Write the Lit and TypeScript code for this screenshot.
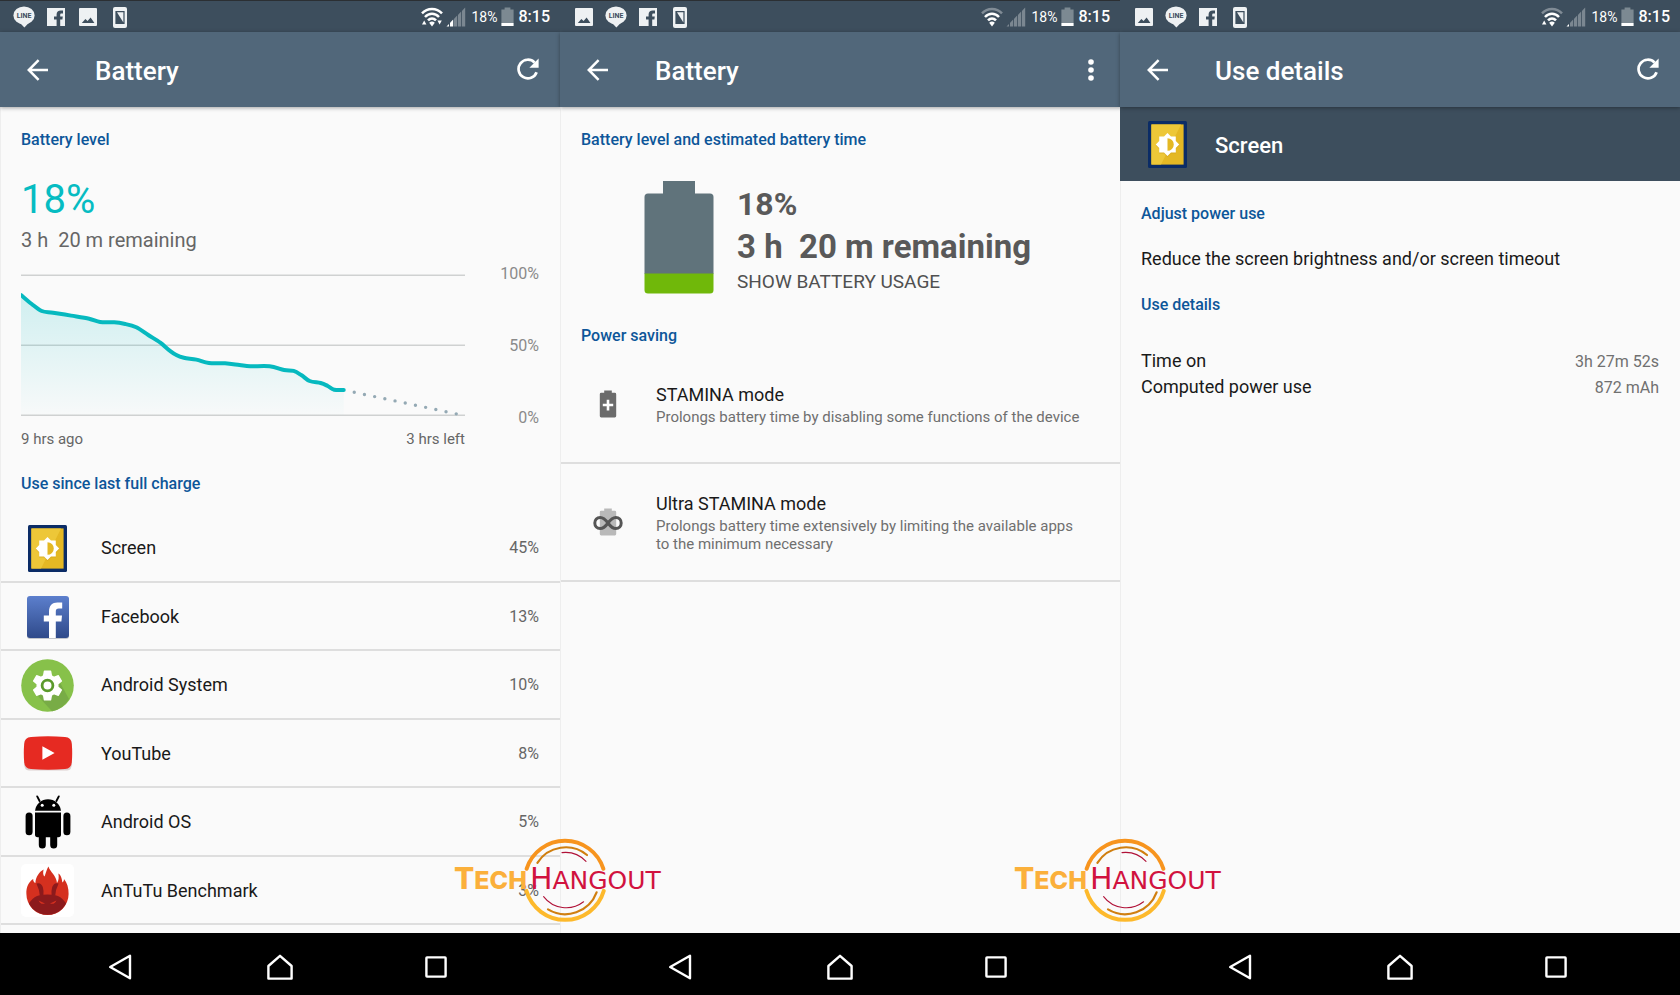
import { LitElement, html, svg, css, nothing } from "lit";
import { customElement, property } from "lit/decorators.js";

type Point = [number, number];

/* ---------- icons ---------- */

const lineIcon = html`<svg width="22" height="22" viewBox="0 0 22 22" aria-hidden="true">
  <ellipse cx="11" cy="9.4" rx="10.6" ry="9" fill="#eef1f3" />
  <path d="M7 17 L11.4 21.6 L17 15.6 Z" fill="#eef1f3" />
  <text x="11" y="12" text-anchor="middle" class="line-word">LINE</text>
</svg>`;

const facebookIcon = html`<svg width="18" height="18" viewBox="0 0 18 18" aria-hidden="true">
  <path fill="#eef1f3" d="M0 0H18V18H13.2V11.6H15.4L15.8 8.6H13.2V7C13.2 6 13.6 5.6 14.6 5.6H16V2.6C15.4 2.5 14.6 2.4 13.8 2.4C11.2 2.4 9.6 3.9 9.6 6.4V8.6H7V11.6H9.6V18H0Z" />
</svg>`;

const pictureIcon = html`<svg width="18" height="18" viewBox="0 0 18 18" aria-hidden="true">
  <rect width="18" height="18" rx="1" fill="#eef1f3" />
  <path fill="#3d4e5d" d="M2.8 15 L6.4 11 L8.6 13 L11.6 9.6 L15.4 15 Z" />
</svg>`;

const phoneIcon = html`<svg width="14" height="21" viewBox="0 0 14 21" aria-hidden="true">
  <rect width="14" height="21" rx="2" fill="#eef1f3" />
  <rect x="2.4" y="4" width="9.2" height="13" fill="#3d4e5d" />
  <path d="M4 5.2 H10.4 V15.6 Z" fill="#eef1f3" />
</svg>`;

const shellIcons = { line: lineIcon, facebook: facebookIcon, picture: pictureIcon, phone: phoneIcon };
type ShellIcon = keyof typeof shellIcons;

const wifiIcon = (full: boolean, up: boolean, down: boolean) => html`<svg width="22" height="20" viewBox="0 0 22 20" aria-hidden="true">
  <g fill="none" stroke="#fff" stroke-width="2.5">
    <path d="M1 6.4 C6.5 0.6 15.5 0.6 21 6.4" stroke-opacity=${full ? 1 : 0.35} />
    <path d="M4 10 C8 5.8 14 5.8 18 10" />
    <path d="M7 13.4 C9.4 10.8 12.6 10.8 15 13.4" />
  </g>
  <path d="M8.2 15.8 Q11 13.4 13.8 15.8 L11 19.4 Z" fill="#fff" />
  ${up ? svg`<path d="M1 17.6 L3.2 13.6 L5.4 17.6 Z" fill="#fff" />` : nothing}
  ${down ? svg`<path d="M16.4 13.6 L20.8 13.6 L18.6 17.6 Z" fill="#fff" />` : nothing}
</svg>`;

const signalIcon = (bars: number) => html`<svg width="20" height="20" viewBox="0 0 20 20" aria-hidden="true">
  ${[
    "M0.5 19.5 L3 17 V19.5 Z",
    "M4 19.5 V15.8 L7.2 12.6 V19.5 Z",
    "M8 19.5 V11.8 L11.2 8.6 V19.5 Z",
    "M12 19.5 V7.8 L15.2 4.6 V19.5 Z",
    "M16 19.5 V3.8 L19.2 0.6 V19.5 Z",
  ].map((d, i) => svg`<path d=${d} fill="#fff" fill-opacity=${i < bars ? 1 : 0.32} />`)}
</svg>`;

const miniBattery = html`<svg width="13" height="20" viewBox="0 0 13 20" aria-hidden="true">
  <path d="M0.4 2.4 H3.6 V0.6 H9.4 V2.4 H12.6 V16 H0.4 Z" fill="#7c8992" />
  <rect x="0.4" y="16" width="12.2" height="3" fill="#fff" />
</svg>`;

const backArrow = html`<svg width="22" height="22" viewBox="0 0 22 22" aria-hidden="true">
  <path d="M21 11 H2 M11.6 1.2 L1.8 11 L11.6 20.8" fill="none" stroke="#fff" stroke-width="2.5" />
</svg>`;

const refreshIcon = html`<svg width="22" height="23" viewBox="0 0 22 23" aria-hidden="true">
  <path d="M19.6 14.2 A9.3 9.3 0 1 1 17.6 4.6" fill="none" stroke="#fff" stroke-width="2.7" />
  <path d="M21.6 0.6 V9.8 H12.4 Z" fill="#fff" />
</svg>`;

const moreIcon = html`<svg width="6" height="22" viewBox="0 0 6 22" aria-hidden="true">
  <circle cx="3" cy="3" r="2.8" fill="#fff" /><circle cx="3" cy="11" r="2.8" fill="#fff" /><circle cx="3" cy="19" r="2.8" fill="#fff" />
</svg>`;

const screenIcon = html`<svg width="39" height="47" viewBox="0 0 39 47" aria-hidden="true">
  <rect width="39" height="47" rx="1.5" fill="#0b2c66" />
  <rect x="3.4" y="3.4" width="32.2" height="40.2" fill="#e4b824" />
  <path d="M3.4 3.4 H33 L13 43.6 H3.4 Z" fill="#edc738" />
  <path d="M19.5 12 L23 15.4 H27.8 V20 L31.2 23.5 L27.8 27 V31.6 H23 L19.5 35 L16 31.6 H11.2 V27 L7.8 23.5 L11.2 20 V15.4 H16 Z" fill="#c79a18" opacity="0.45" transform="translate(0 1)" />
  <path d="M19.5 12 L23 15.4 H27.8 V20 L31.2 23.5 L27.8 27 V31.6 H23 L19.5 35 L16 31.6 H11.2 V27 L7.8 23.5 L11.2 20 V15.4 H16 Z" fill="#fff" />
  <path d="M19.5 17.2 A6.3 6.3 0 0 1 19.5 29.8 Z" fill="#e4b824" />
</svg>`;

const facebookTile = html`<svg width="44" height="44" viewBox="0 0 44 44" aria-hidden="true">
  <defs><linearGradient id="fb" x1="0" y1="0" x2="0" y2="1"><stop offset="0" stop-color="#5c7fcd" /><stop offset="1" stop-color="#2f4a8a" /></linearGradient></defs>
  <rect x="1" y="2" width="42" height="42" rx="3" fill="#c3c6cc" />
  <rect x="1" y="1" width="42" height="42" rx="3" fill="url(#fb)" />
  <path fill="#fff" d="M23 43 V26.6 H17.8 V20.4 H23 V16.4 C23 10.6 26.2 7.4 31.4 7.4 H36.2 V13.4 H32.8 C30.6 13.4 29.8 14.4 29.8 16.6 V20.4 H36 L35.4 26.6 H29.8 V43 Z" />
</svg>`;

const gearPath = (() => {
  const parts: string[] = [];
  for (let i = 0; i < 6; i++) {
    const a = (i * 60 - 90) * (Math.PI / 180);
    const at = (r: number, d: number) => {
      const t = a + (d * Math.PI) / 180;
      return `${(26.5 + r * Math.cos(t)).toFixed(2)} ${(26.5 + r * Math.sin(t)).toFixed(2)}`;
    };
    parts.push(`${i ? "L" : "M"}${at(10.4, -22)} L${at(14.6, -12)} L${at(14.6, 12)} L${at(10.4, 22)}`);
  }
  return parts.join(" ") + " Z";
})();

const gearIcon = html`<svg width="53" height="53" viewBox="0 0 53 53" aria-hidden="true">
  <circle cx="26.5" cy="26.5" r="26.3" fill="#87c14a" />
  <path d="M16 36 L37 20 L48 40 A26.3 26.3 0 0 1 31 52.2 Z" fill="#78ac46" />
  <path d=${gearPath} fill="#fff" stroke="#fff" stroke-width="1.4" stroke-linejoin="round" />
  <circle cx="26.5" cy="26.5" r="5.4" fill="#fff" stroke="#5b9a2c" stroke-width="2.8" />
</svg>`;

const youtubeIcon = html`<svg width="50" height="36" viewBox="0 0 50 36" aria-hidden="true">
  <path d="M6 2 H44 Q49 2 49 9 V27 Q49 34.4 44 34.4 H6 Q1 34.4 1 27 V9 Q1 2 6 2 Z" fill="#dccfcf" />
  <path d="M8 1 Q25 -0.4 42 1 Q48.4 1.4 48.8 8 Q49.6 17 48.8 26 Q48.4 32.6 42 33 Q25 34.4 8 33 Q1.6 32.6 1.2 26 Q0.4 17 1.2 8 Q1.6 1.4 8 1 Z" fill="#e62a22" />
  <path d="M19.4 10.2 L31.6 17 L19.4 23.8 Z" fill="#fff" />
</svg>`;

const androidIcon = html`<svg width="46" height="54" viewBox="0 0 46 54" aria-hidden="true">
  <path d="M14.6 6 L12.2 1.4 M31.4 6 L33.8 1.4" stroke="#000" stroke-width="1.9" stroke-linecap="round" />
  <path d="M10 15.8 A13.1 13.1 0 0 1 36 15.8 Z" fill="#000" />
  <circle cx="17.2" cy="10.3" r="1.5" fill="#fff" /><circle cx="28.8" cy="10.3" r="1.5" fill="#fff" />
  <path d="M10 17.6 H36 V39.6 Q36 42.2 33.4 42.2 H12.6 Q10 42.2 10 39.6 Z" fill="#000" />
  <rect x="0.6" y="17.6" width="7" height="22.6" rx="3.5" /><rect x="38.4" y="17.6" width="7" height="22.6" rx="3.5" />
  <rect x="13.8" y="36" width="7" height="17.4" rx="3.5" /><rect x="25.2" y="36" width="7" height="17.4" rx="3.5" />
</svg>`;

const antutuIcon = html`<svg width="53" height="53" viewBox="0 0 53 53" aria-hidden="true">
  <defs><clipPath id="ball"><circle cx="26.5" cy="29.8" r="21" /></clipPath></defs>
  <rect width="53" height="53" rx="5" fill="#fff" />
  <path d="M5.4 30 C5 23 8 17.6 12.2 15 C12 17 13 18.6 14.4 19 C14.6 13 18.6 7.6 22.6 5.6 C21.8 9 22 11.4 23.6 12.6 C24.8 9 26 5 27.4 2.6 C29 8 35.6 12 36 19 C37.8 16.6 38 13 37.4 9.4 C40.4 11.4 41 15.6 41.4 18.4 C42.6 17.6 43 16.4 43 15 C46 18.6 47.8 24 47.6 30 A21.1 21.1 0 0 1 5.4 30 Z" fill="#d5301f" />
  <g fill="#8c1a1c">
    <path d="M15.4 19.6 Q19.8 17.8 21.8 23 Q23 27 22.4 31.6 L18.8 31.8 Q18.6 26 15.4 19.6 Z" />
    <path d="M37.6 19.6 Q33.2 17.8 31.2 23 Q30 27 30.6 31.6 L34.2 31.8 Q34.4 26 37.6 19.6 Z" />
    <path d="M5 43 C12 34 14 30.6 26.5 30.6 C39 30.6 41 34 48 43 V53 H5 Z" clip-path="url(#ball)" />
  </g>
  <path d="M17.6 36.4 L24 39.4 Q19.6 41 17.6 36.4 Z M35.4 36.4 L29 39.4 Q33.4 41 35.4 36.4 Z" fill="#d5301f" />
</svg>`;

const bigBattery = html`<svg width="70" height="113" viewBox="0 0 70 113" aria-hidden="true">
  <path d="M0.5 93 V16 Q0.5 12.5 4 12.5 H19 V0 H51 V12.5 H66 Q69.5 12.5 69.5 16 V93 Z" fill="#60737b" />
  <path d="M0.5 92.5 H69.5 V109 Q69.5 112.5 66 112.5 H4 Q0.5 112.5 0.5 109 Z" fill="#70b80a" />
</svg>`;

const staminaIcon = html`<svg width="30" height="28" viewBox="0 0 30 28" aria-hidden="true">
  <path d="M8.2 2.8 H11.2 V0.6 H18.8 V2.8 H21.8 Q23.2 2.8 23.2 4.2 V26 Q23.2 27.4 21.8 27.4 H8.2 Q6.8 27.4 6.8 26 V4.2 Q6.8 2.8 8.2 2.8 Z" fill="#6b6b6b" />
  <path d="M15 9.8 V20.4 M9.8 15 H20.2" stroke="#fff" stroke-width="2.6" />
</svg>`;

const ultraIcon = html`<svg width="30" height="28" viewBox="0 0 30 28" aria-hidden="true">
  <path d="M8.2 2.8 H11.2 V0.6 H18.8 V2.8 H21.8 Q23.2 2.8 23.2 4.2 V26 Q23.2 27.4 21.8 27.4 H8.2 Q6.8 27.4 6.8 26 V4.2 Q6.8 2.8 8.2 2.8 Z" fill="#b9b9b9" />
  <path d="M15 15 C12.4 11.4 10.4 9.4 7.2 9.4 C4 9.4 1.8 11.8 1.8 15 C1.8 18.2 4 20.6 7.2 20.6 C10.4 20.6 12.4 18.6 15 15 C17.6 11.4 19.6 9.4 22.8 9.4 C26 9.4 28.2 11.8 28.2 15 C28.2 18.2 26 20.6 22.8 20.6 C19.6 20.6 17.6 18.6 15 15 Z" fill="none" stroke="#555" stroke-width="3" />
</svg>`;

const navBack = html`<svg width="24" height="26" viewBox="0 0 24 26" aria-hidden="true"><path d="M22 1.8 V24.2 L2.2 13 Z" fill="none" stroke="#fff" stroke-width="2.4" stroke-linejoin="round" /></svg>`;
const navHome = html`<svg width="26" height="26" viewBox="0 0 26 26" aria-hidden="true"><path d="M13 1.8 L24.6 12 V24.6 H1.4 V12 Z" fill="none" stroke="#fff" stroke-width="2.4" stroke-linejoin="round" /></svg>`;
const navRecent = html`<svg width="22" height="22" viewBox="0 0 22 22" aria-hidden="true"><rect x="1.4" y="1.4" width="19.2" height="19.2" rx="0.6" fill="none" stroke="#fff" stroke-width="2.4" /></svg>`;

/* ---------- battery history chart ---------- */

const history: Point[] = [
  [0, 31], [10.7, 40], [20.7, 47], [32, 48.7], [50, 51.6], [68, 54.7], [79, 58], [93, 58.3], [104, 60],
  [115, 63.3], [127, 71], [139, 78.7], [148, 86.3], [155, 91], [162.5, 93.8], [175, 95.6], [187.5, 99],
  [203.6, 99.3], [218, 101], [228.6, 102.3], [248, 102.3], [262.5, 106], [272, 106.9], [280, 111.3],
  [288, 117], [299, 119], [306, 122], [312.5, 125.7], [322, 126],
];

const smooth = (pts: Point[]): string =>
  pts.slice(1).reduce((d, p, i) => {
    const a = pts[i];
    const before = pts[i - 1] ?? a;
    const after = pts[i + 2] ?? p;
    const c1 = [a[0] + (p[0] - before[0]) / 6, a[1] + (p[1] - before[1]) / 6];
    const c2 = [p[0] - (after[0] - a[0]) / 6, p[1] - (after[1] - a[1]) / 6];
    return `${d} C${c1[0].toFixed(1)} ${c1[1].toFixed(1)} ${c2[0].toFixed(1)} ${c2[1].toFixed(1)} ${p[0]} ${p[1]}`;
  }, `M${pts[0][0]} ${pts[0][1]}`);

@customElement("battery-chart")
export class BatteryChart extends LitElement {
  static styles = css`
    :host { display: grid; grid-template-columns: 1fr 74px; color: #8a8a8a; font-size: 16px; line-height: 20px; }
    .plot { display: block; width: 100%; height: 164px; }
    .scale { display: flex; flex-direction: column; justify-content: space-between; text-align: right; }
    .range { display: flex; justify-content: space-between; color: #666; padding-top: 1px; font-size: 15px; }
  `;
  render() {
    const line = smooth(history);
    return html`
      <svg class="plot" viewBox="0 0 443 164" preserveAspectRatio="none" role="img" aria-label="Battery level history">
        <defs><linearGradient id="fade" x1="0" y1="0" x2="0" y2="1">
          <stop offset="0" stop-color="#00b9bf" stop-opacity="0.17" /><stop offset="1" stop-color="#00b9bf" stop-opacity="0.01" />
        </linearGradient></defs>
        ${[10.5, 80.5, 150.5].map((y) => svg`<rect x="0" y=${y} width="443" height="1.5" fill="#cfd1d1" />`)}
        <path d="${line} V151 H0 Z" fill="url(#fade)" />
        <path d=${line} fill="none" stroke="#06b9bf" stroke-width="4" stroke-linecap="round" />
        <path d="M332.5 128.3 L436 150.2" stroke="#94a9b4" stroke-width="3.4" stroke-linecap="round" stroke-dasharray="0 10.4" />
      </svg>
      <div class="scale"><span>100%</span><span>50%</span><span>0%</span></div>
      <div class="range"><span>9 hrs ago</span><span>3 hrs left</span></div>
    `;
  }
}

/* ---------- phone frame ---------- */

@customElement("phone-screen")
export class PhoneScreen extends LitElement {
  static styles = css`
    :host { display: flex; flex-direction: column; min-width: 0; background: #fafafa; position: relative; }
    .status { box-sizing: border-box; height: 32px; background: #3d4e5d; border-top: 1px solid #2b2f33; display: flex; align-items: center; justify-content: space-between; padding: 1px 10px 0 8px; color: #fff; }
    .plain { border-top-color: #3d4e5d; }
    .notes, .system { display: flex; align-items: center; }
    .note { width: 32px; display: flex; justify-content: center; }
    .line-word { font: 700 7px Roboto, sans-serif; fill: #3d4e5d; }
    .system { gap: 3px; }
    .percent { font-size: 14px; line-height: 20px; padding-left: 3px; }
    .clock { font-size: 16px; line-height: 20px; font-weight: 500; padding-left: 2px; }
    .bar { height: 75px; background: #51677a; color: #fff; display: flex; align-items: center; padding: 0 21px 0 17px; box-shadow: 0 1px 4px rgba(0, 0, 0, 0.35); position: relative; }
    .title { flex: 1; margin: 0; padding: 2px 0 0 36px; font-size: 26px; line-height: 32px; font-weight: 500; }
    button { border: 0; padding: 0; background: none; display: flex; align-items: center; justify-content: center; height: 42px; cursor: pointer; }
    .back { width: 42px; }
    .action { min-width: 16px; }
    .content { flex: 1; display: flex; flex-direction: column; min-height: 0; }
    .nav { box-sizing: border-box; height: 62px; background: #000; display: flex; align-items: center; padding: 6px 107px 0 99px; justify-content: space-between; }
    .nav button { width: 42px; }
    .nav .recent { width: 34px; }
  `;
  @property() heading = "";
  @property() action: "refresh" | "more" = "refresh";
  @property({ attribute: false }) notes: ShellIcon[] = [];
  @property({ type: Number }) bars = 0;
  @property({ type: Boolean }) strong = false;
  @property({ type: Boolean }) up = false;
  @property({ type: Boolean }) down = false;
  @property({ type: Boolean }) plain = false;
  render() {
    return html`
      <div class="status ${this.plain ? "plain" : ""}">
        <div class="notes">${this.notes.map((n) => html`<span class="note">${shellIcons[n]}</span>`)}</div>
        <div class="system">
          ${wifiIcon(this.strong, this.up, this.down)} ${signalIcon(this.bars)}
          <span class="percent">18%</span>${miniBattery}<span class="clock">8:15</span>
        </div>
      </div>
      <header class="bar">
        <button class="back" aria-label="Back">${backArrow}</button>
        <h1 class="title">${this.heading}</h1>
        <button class="action" aria-label=${this.action === "refresh" ? "Refresh" : "More options"}>
          ${this.action === "refresh" ? refreshIcon : moreIcon}
        </button>
      </header>
      <main class="content"><slot></slot></main>
      <nav class="nav">
        <button aria-label="Back">${navBack}</button>
        <button aria-label="Home">${navHome}</button>
        <button class="recent" aria-label="Recent apps">${navRecent}</button>
      </nav>
      <slot name="mark"></slot>
    `;
  }
}

@customElement("tech-mark")
export class TechMark extends LitElement {
  static styles = css`
    :host { position: absolute; left: -106px; bottom: 70px; width: 212px; height: 88px; pointer-events: none; }
    .rings { position: absolute; left: 67px; top: 0; }
    .word { position: absolute; left: 0; top: 27px; line-height: 28px; white-space: nowrap; display: flex; align-items: baseline; }
    .tech { color: #fbb03b; font-family: Inter, sans-serif; font-weight: 800; font-size: 25px; }
    .hang { color: #d1123f; font-family: "DejaVu Sans", sans-serif; font-size: 25px; padding-left: 3px; }
    .cap { font-size: 30px; }
  `;
  render() {
    return html`
      <svg class="rings" width="88" height="88" viewBox="-44 -44 88 88" fill="none" stroke-linecap="round" aria-hidden="true">
        <path d="M-38.4 -12.2 A40.3 40.3 0 0 1 38.4 -12.2" stroke="#f7941e" stroke-width="4" />
        <path d="M-38.6 9.8 A40.3 40.3 0 0 0 38.8 9.8" stroke="#fdb92c" stroke-width="4" />
        <path d="M-27.6 -18.2 A33.5 33.5 0 0 1 22 -26" stroke="#d07f10" stroke-width="2.2" />
        <path d="M-17 28.4 A33.5 33.5 0 0 0 31.6 11.4" stroke="#d07f10" stroke-width="2.2" />
        <path d="M-3 -28.4 A28.5 28.5 0 0 1 21 -19.6" stroke="#b01238" stroke-width="1.1" />
        <path d="M-21.4 15.6 A28.5 28.5 0 0 0 18.6 20.8" stroke="#b01238" stroke-width="1.1" />
      </svg>
      <div class="word"><span class="tech"><span class="cap">T</span>ECH</span><span class="hang"><span class="cap">H</span>ANGOUT</span></div>
    `;
  }
}

/* ---------- page ---------- */

const usage = [
  { name: "Screen", share: "45%", icon: screenIcon },
  { name: "Facebook", share: "13%", icon: facebookTile },
  { name: "Android System", share: "10%", icon: gearIcon },
  { name: "YouTube", share: "8%", icon: youtubeIcon },
  { name: "Android OS", share: "5%", icon: androidIcon },
  { name: "AnTuTu Benchmark", share: "3%", icon: antutuIcon },
];

const modes = [
  { name: "STAMINA mode", text: "Prolongs battery time by disabling some functions of the device", icon: staminaIcon },
  { name: "Ultra STAMINA mode", text: "Prolongs battery time extensively by limiting the available apps to the minimum necessary", icon: ultraIcon },
];

const details = [
  ["Time on", "3h 27m 52s"],
  ["Computed power use", "872 mAh"],
];

@customElement("app-root")
export class AppRoot extends LitElement {
  static styles = css`
    :host { display: grid; grid-template-columns: repeat(3, minmax(0, 1fr)); min-height: 100vh; overflow: hidden; font-family: Roboto, "Noto Sans", sans-serif; color: #191919; }
    .body { flex: 1; display: flex; flex-direction: column; padding: 23px 21px 0 20px; border-left: 1px solid #eeeeee; }
    .section { margin: 0; font-size: 16px; line-height: 20px; font-weight: 500; color: #0d5699; }
    .level { margin: 0; padding-top: 26px; font-size: 40px; line-height: 48px; color: #06bcc2; }
    .left { margin: 0; padding: 4px 0 12px; font-size: 20px; line-height: 24px; color: #666; white-space: pre; }
    .since { padding-top: 25px; }
    .list { flex: 1; display: grid; grid-auto-rows: 1fr; list-style: none; margin: 20px -21px 0 -20px; padding: 0 0 8px; }
    .entry { display: flex; border-bottom: 2px solid #dedede; }
    .row { flex: 1; display: flex; align-items: center; gap: 27px; border: 0; background: none; padding: 2px 21px 0 20px; font: inherit; font-size: 18px; line-height: 22px; color: inherit; text-align: left; cursor: pointer; }
    .icon { width: 53px; display: flex; justify-content: center; }
    .name { flex: 1; }
    .share { font-size: 16px; color: #666; }
    .hero { display: flex; align-items: center; gap: 23px; padding: 31px 0 32px 63px; color: #595959; }
    .facts { display: flex; flex-direction: column; align-items: flex-start; gap: 3px; padding-top: 2px; }
    .big { margin: 0; font-size: 32px; line-height: 40px; font-weight: 700; }
    .bigger { font-size: 33px; white-space: pre; }
    .show { border: 0; background: none; padding: 0; font: inherit; font-size: 19px; line-height: 24px; font-weight: 400; color: #505050; cursor: pointer; }
    .modes { list-style: none; margin: 0 -21px 0 -20px; padding: 0; }
    .mode { box-sizing: border-box; width: 100%; min-height: 116px; display: flex; align-items: center; gap: 33px; border: 0; background: none; padding: 2px 34px 0 32px; font: inherit; color: inherit; text-align: left; cursor: pointer; }
    .glyph { flex: none; width: 30px; padding-top: 2px; }
    .text { display: flex; flex-direction: column; gap: 2px; }
    .mode-name { font-size: 18px; line-height: 22px; }
    .note { font-size: 15px; line-height: 18px; color: #6f6f6f; }
    .subject { height: 74px; background: #3d4e5d; color: #fff; display: flex; align-items: center; gap: 28px; padding-left: 28px; }
    .subject-name { margin: 0; padding-top: 3px; font-size: 22px; line-height: 28px; font-weight: 500; }
    .tip { margin: 0; padding: 24px 0 25px; font-size: 18px; line-height: 22px; }
    .facts-list { margin: 0; padding-top: 35px; display: flex; flex-direction: column; gap: 4px; }
    .fact { display: flex; justify-content: space-between; font-size: 18px; line-height: 22px; }
    .value { margin: 0; padding-top: 1px; font-size: 16px; line-height: 21px; color: #707070; }
  `;
  render() {
    return html`
      <phone-screen heading="Battery" .notes=${["line", "facebook", "picture", "phone"]} .bars=${2} strong up down>
        <div class="body">
          <h2 class="section">Battery level</h2>
          <p class="level">18%</p>
          <p class="left">3 h  20 m remaining</p>
          <battery-chart></battery-chart>
          <h2 class="section since">Use since last full charge</h2>
          <ul class="list">
            ${usage.map((u) => html`<li class="entry"><button class="row"><span class="icon">${u.icon}</span><span class="name">${u.name}</span><span class="share">${u.share}</span></button></li>`)}
          </ul>
        </div>
      </phone-screen>
      <phone-screen heading="Battery" action="more" .notes=${["picture", "line", "facebook", "phone"]}>
        <div class="body">
          <h2 class="section">Battery level and estimated battery time</h2>
          <div class="hero">
            ${bigBattery}
            <div class="facts">
              <p class="big">18%</p>
              <p class="big bigger">3 h  20 m remaining</p>
              <button class="show">SHOW BATTERY USAGE</button>
            </div>
          </div>
          <h2 class="section">Power saving</h2>
          <ul class="modes">
            ${modes.map((m) => html`<li class="entry"><button class="mode"><span class="glyph">${m.icon}</span><span class="text"><span class="mode-name">${m.name}</span><span class="note">${m.text}</span></span></button></li>`)}
          </ul>
        </div>
        <tech-mark slot="mark"></tech-mark>
      </phone-screen>
      <phone-screen heading="Use details" .notes=${["picture", "line", "facebook", "phone"]} .bars=${1} up plain>
        <div class="subject">${screenIcon}<h2 class="subject-name">Screen</h2></div>
        <div class="body">
          <h2 class="section">Adjust power use</h2>
          <p class="tip">Reduce the screen brightness and/or screen timeout</p>
          <h2 class="section">Use details</h2>
          <dl class="facts-list">
            ${details.map(([k, v]) => html`<div class="fact"><dt>${k}</dt><dd class="value">${v}</dd></div>`)}
          </dl>
        </div>
        <tech-mark slot="mark"></tech-mark>
      </phone-screen>
    `;
  }
}
